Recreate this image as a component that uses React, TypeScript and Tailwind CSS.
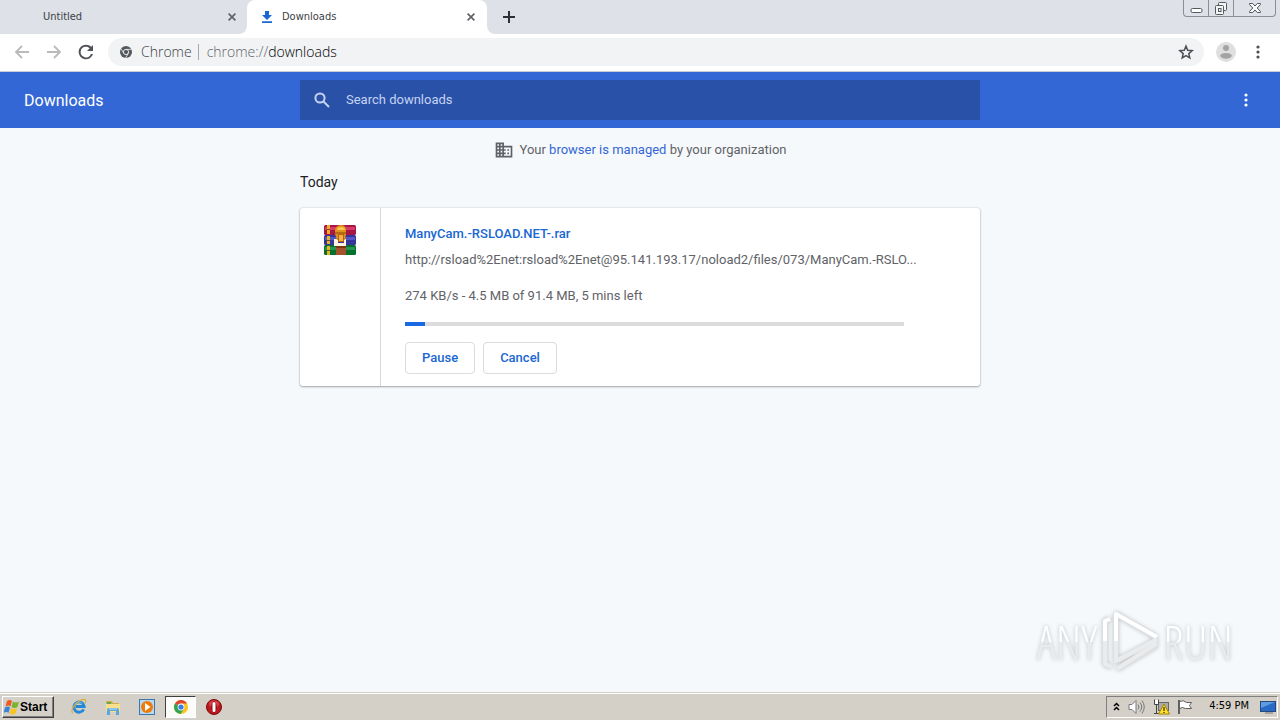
import type { ReactNode } from "react";

const iconButton = "flex shrink-0 items-center justify-center";

function CloseIcon() {
  return (
    <svg width="8" height="8" viewBox="0 0 8 8" stroke="currentColor" strokeWidth="1.7">
      <path d="M.6.6l6.8 6.8M7.4.6L.6 7.4" />
    </svg>
  );
}

function MoreIcon() {
  return (
    <svg width="4" height="14" viewBox="0 0 4 14" fill="currentColor">
      <circle cx="2" cy="2" r="1.6" />
      <circle cx="2" cy="7" r="1.6" />
      <circle cx="2" cy="12" r="1.6" />
    </svg>
  );
}

function TabStrip() {
  return (
    <div className="flex h-[34px] shrink-0 bg-[#dee1e8] text-[11px] text-[#3c4043]">
      <div className="flex w-[247px] items-center pr-[11px] pl-[43px]">
        <span className="flex-1">Untitled</span>
        <button aria-label="Close Untitled" className={`${iconButton} text-[#5f6368]`}>
          <CloseIcon />
        </button>
      </div>
      <div className="relative flex w-60 items-center rounded-t-lg bg-white pr-3 pl-[14px]">
        <svg className="absolute bottom-0 -left-2" width="8" height="8" fill="white">
          <path d="M8 0v8H0a8 8 0 0 0 8-8z" />
        </svg>
        <svg className="absolute -right-2 bottom-0" width="8" height="8" fill="white">
          <path d="M0 0v8h8a8 8 0 0 1-8-8z" />
        </svg>
        <svg width="12" height="12" viewBox="0 0 12 12" fill="#1967d2" className="mr-[9px]">
          <path d="M4 0h4v4h3L6 9 1 4h3zM1 10.300h10V12H1z" />
        </svg>
        <span className="flex-1">Downloads</span>
        <button aria-label="Close Downloads" className={`${iconButton} text-[#5f6368]`}>
          <CloseIcon />
        </button>
      </div>
      <button aria-label="New tab" className={`${iconButton} ml-4 w-3 text-[#2d3033]`}>
        <svg width="12" height="12" stroke="currentColor" strokeWidth="2">
          <path d="M6 0v12M0 6h12" />
        </svg>
      </button>
      <div className="mr-1 ml-auto flex h-[17px] rounded-b-[4px] border border-t-0 border-[#8b8e94] text-[#55585d]">
        <button aria-label="Minimize" className={`${iconButton} w-6`}>
          <svg width="13" height="13" fill="white" stroke="currentColor">
            <rect x="1" y="6.500" width="11" height="4" rx="1.500" />
          </svg>
        </button>
        <button aria-label="Restore" className={`${iconButton} w-[26px] border-x border-[#8b8e94]`}>
          <svg width="14" height="13" fill="#f3f4f6" stroke="currentColor">
            <rect x="4.500" y=".5" width="8" height="8" rx="1" />
            <rect x="1.500" y="3.500" width="8" height="9" rx="1" />
            <rect x="4.500" y="6.500" width="2.500" height="3" />
          </svg>
        </button>
        <button aria-label="Close window" className={`${iconButton} w-[41px]`}>
          <svg width="12" height="10" fill="#f8f9fb" stroke="currentColor">
            <path d="M.5.5h3.200L6 3 8.300.5h3.200v1L8.200 5l3.300 3.500v1H8.300L6 7 3.700 9.500H.5v-1L3.800 5 .5 1.500z" />
          </svg>
        </button>
      </div>
    </div>
  );
}

function Toolbar() {
  return (
    <div className="flex h-[38px] shrink-0 items-center border-b border-[#c9cdd4] bg-white px-[14px] pb-px">
      <button aria-label="Back" className={`${iconButton} w-4 text-[#b9babc]`}>
        <svg width="16" height="14" fill="none" stroke="currentColor" strokeWidth="1.800">
          <path d="M15 7H2M8 1L2 7l6 6" />
        </svg>
      </button>
      <button aria-label="Forward" className={`${iconButton} ml-4 w-4 text-[#b9babc]`}>
        <svg width="16" height="14" fill="none" stroke="currentColor" strokeWidth="1.800">
          <path d="M1 7h13M8 1l6 6-6 6" />
        </svg>
      </button>
      <button aria-label="Reload" className={`${iconButton} ml-4 w-4 text-[#4f5256]`}>
        <svg width="16" height="16" fill="currentColor">
          <path d="M13.300 2.700A7.300 7.300 0 0 0 8 .7a7.300 7.300 0 1 0 7 9.200h-2.100A5.300 5.300 0 1 1 8 2.700c1.500 0 2.800.6 3.700 1.600L9 7h6V1z" />
        </svg>
      </button>
      <div className="ml-[14px] flex h-7 flex-1 items-center rounded-full bg-[#f1f3f4] pr-[10px] pl-3 font-['Open_Sans',sans-serif] text-sm font-light text-[#5f6368]">
        <svg width="12" height="12" viewBox="0 0 12 12">
          <circle cx="6" cy="6" r="6" fill="#54585c" />
          <circle cx="6" cy="6" r="2.600" fill="none" stroke="#f1f3f4" strokeWidth=".9" />
          <path d="M6 3.400h5.400M3.700 7.300L1.100 2.700M8.300 7.300L5.600 12" stroke="#f1f3f4" strokeWidth=".8" />
        </svg>
        <span className="ml-[9px] text-[#3c4043]">Chrome</span>
        <span className="mr-2 ml-[6px] h-4 w-px bg-[#a5a8ac]" />
        <span>
          chrome://<span className="text-black">downloads</span>
        </span>
        <button aria-label="Bookmark this tab" className={`${iconButton} ml-auto text-[#4d5156]`}>
          <svg width="16" height="16" viewBox="0 0 16 16" fill="none" stroke="currentColor" strokeWidth="1.500">
            <path d="M8 2l1.700 4.200 4.500.4-3.400 3 1 4.400L8 11.600 4.200 14l1-4.400-3.400-3 4.500-.4z" />
          </svg>
        </button>
      </div>
      <button aria-label="Profile" className={`${iconButton} ml-3 w-5`}>
        <svg width="20" height="20">
          <circle cx="10" cy="10" r="10" fill="#dfdfdf" />
          <circle cx="10" cy="6" r="3" fill="#a3a3a3" />
          <ellipse cx="10" cy="13.800" rx="5.800" ry="2.900" fill="#a3a3a3" />
        </svg>
      </button>
      <button aria-label="Browser menu" className={`${iconButton} mr-[6px] ml-5 w-1 text-[#4d5156]`}>
        <MoreIcon />
      </button>
    </div>
  );
}

function PageHeader() {
  return (
    <header className="grid h-14 shrink-0 grid-cols-[1fr_minmax(0,680px)_1fr] items-center bg-[#3367d6] text-white">
      <h1 className="pt-0.5 pl-6 text-base">Downloads</h1>
      <label className="flex h-10 items-center bg-[#2951a8] pl-[14px] text-[#c5d3f2]">
        <svg width="16" height="16" fill="none" stroke="currentColor" strokeWidth="2">
          <circle cx="6" cy="6" r="4.600" />
          <path d="M9.500 9.500l5.500 5.500" />
        </svg>
        <input
          type="search"
          aria-label="Search downloads"
          placeholder="Search downloads"
          className="ml-4 flex-1 bg-transparent text-[13px] outline-none placeholder:text-[#c5d3f2]"
        />
      </label>
      <button aria-label="More actions" className={`${iconButton} mr-8 w-1 justify-self-end`}>
        <MoreIcon />
      </button>
    </header>
  );
}

function ArchiveIcon() {
  return (
    <svg width="32" height="32" viewBox="0 0 32 32">
      <rect y="1" width="32" height="10" rx="1.500" fill="#a81646" />
      <path d="M1 3h30v3H1z" fill="#d93a68" />
      <rect y="11" width="32" height="10" rx="1.500" fill="#34369a" />
      <path d="M1 13h30v3H1z" fill="#5358c4" />
      <rect y="21" width="32" height="10" rx="1.500" fill="#08702d" />
      <path d="M1 23h30v3H1z" fill="#259452" />
      <path d="M3 1h3v9H3zM3 12h3v8H3zM3 22h3v9H3z" fill="#e6b323" />
      <path d="M3 5h3v1H3zM3 16h3v1H3zM3 26h3v1H3z" fill="#77520e" />
      <path d="M12 21h10v10H12z" fill="#a4522c" />
      <path d="M12 22h10v2H12z" fill="#7a3515" />
      <path d="M10 15h4v4h6v-4h2v7H10z" fill="#fff4e2" />
      <path d="M11 10V6q1-5 6-5t5 5v4l-1 6h-8z" fill="#dc921c" />
      <path d="M13 6q0-3 4-3t4 3z" fill="#f8c850" />
      <path d="M11 8h11v2H11z" fill="#b66b12" />
      <path d="M14 10h6v8h-6z" fill="#b4640d" />
      <path d="M15 11h4v6h-4z" fill="#f3b04a" />
    </svg>
  );
}

function ActionButton({ children }: { children: ReactNode }) {
  return (
    <button className="h-8 rounded border border-[#dadce0] px-4 text-[13px] font-medium text-[#1967d2]">
      {children}
    </button>
  );
}

function DownloadCard() {
  return (
    <article className="flex rounded-[3px] bg-white text-[13px] text-[#5f6368] shadow-[0_1px_2px_rgba(60,64,67,0.4),0_0_2px_rgba(60,64,67,0.25)]">
      <div className="flex w-[81px] shrink-0 justify-center border-r border-[#d8d8d8] pt-4">
        <ArchiveIcon />
      </div>
      <div className="min-w-0 flex-1 py-3 pr-[76px] pl-6">
        <a href="#file" className="block pt-1 leading-5 font-medium text-[#1967d2]">
          ManyCam.-RSLOAD.NET-.rar
        </a>
        <a href="#source" className="mt-[6px] block leading-5 whitespace-nowrap">
          http://rsload%2Enet:rsload%2Enet@95.141.193.17/noload2/files/073/ManyCam.-RSLO...
        </a>
        <p className="mt-4 leading-5">274 KB/s - 4.5 MB of 91.4 MB, 5 mins left</p>
        <div
          role="progressbar"
          aria-label="Download progress"
          aria-valuenow={4}
          className="mt-4 h-1 bg-[#dcdcdc]"
        >
          <div className="h-1 bg-[#1a6ae4]" style={{ width: "4%" }} />
        </div>
        <div className="mt-4 flex gap-2">
          <ActionButton>Pause</ActionButton>
          <ActionButton>Cancel</ActionButton>
        </div>
      </div>
    </article>
  );
}

function Watermark() {
  const word =
    "bg-linear-to-b from-white from-50% to-[#e9ebec] to-50% bg-clip-text text-[48px] leading-[56px] text-transparent";
  return (
    <div className="absolute right-[47px] bottom-[18px] flex items-center font-['Open_Sans_Condensed_Light','Open_Sans_Condensed','Roboto_Condensed',sans-serif] font-light drop-shadow-[0_0_2px_rgba(0,0,0,0.24)]">
      <span className={word}>ANY</span>
      <svg width="66" height="64" viewBox="0 0 66 64" fill="none" strokeLinejoin="round">
        <path d="M19 4v46M19 4l41 24M12 9L8 11v43l6 3M21 50L60 31M20 59l40-24" stroke="#dfe1e3" strokeWidth="5" />
        <path d="M19 31V4l41 23M13 9L8 11v20" stroke="white" strokeWidth="4" />
        <path d="M19 31v20l41-22M8 31v23l7 3M20 59l40-26" stroke="#e9ebec" strokeWidth="4" />
      </svg>
      <span className={word}>RUN</span>
    </div>
  );
}

function StartFlag() {
  return (
    <svg width="16" height="16" viewBox="0 0 16 16" className="shrink-0">
      <path d="M3 2q3-2 5 0L6.500 7.500q-2-2-5 0z" fill="#ed5b24" />
      <path d="M9 2.500q3 2 6 0L13.500 8q-3 2-6 0z" fill="#79b52c" />
      <path d="M1 8.500q3-2 5 0L4.500 14q-2-2-5 0z" fill="#3b83d9" />
      <path d="M7 9q3 2 6 0l-1.500 5.500q-3 2-6 0z" fill="#f8c51e" />
    </svg>
  );
}

function Taskbar() {
  return (
    <footer className="flex h-7 shrink-0 items-center border-t border-[#d4d0c8] bg-[#d4d0c8] font-['DejaVu_Sans_Condensed','DejaVu_Sans',sans-serif] text-[11px] text-black shadow-[inset_0_1px_0_white]">
      <button className="ml-[2px] flex h-[22px] w-[52px] items-center border border-t-white border-r-[#404040] border-b-[#404040] border-l-white pl-px font-['Liberation_Sans',sans-serif] text-xs font-bold shadow-[inset_-1px_-1px_0_#808080]">
        <StartFlag />
        Start
      </button>
      <button aria-label="Internet Explorer" className={`${iconButton} ml-[17px] w-4`}>
        <svg width="17" height="17" viewBox="0 0 17 17" fill="none">
          <path d="M13.500 11.500a5.500 5.500 0 1 1 .500-3H5" stroke="#2388d8" strokeWidth="3" />
          <path d="M4 6.500a5 5 0 0 1 8-1.500" stroke="#79caf4" />
          <path d="M2 15.500C-2 12 8 1 14 1c3 0 1 4 1 4" stroke="#dcae35" strokeWidth="1.300" />
        </svg>
      </button>
      <button aria-label="Windows Explorer" className={`${iconButton} ml-[18px] w-4`}>
        <svg width="16" height="16">
          <path d="M1 2h6l1 2h6v9H1z" fill="#d9ad45" />
          <path d="M2 3h4v3H2z" fill="#58ad5b" />
          <path d="M1 5h14v8H1z" fill="#f7df8c" />
          <path d="M2 16v-5q0-2 2-2h8q2 0 2 2v5h-3v-4H5v4z" fill="#5ba7d9" />
          <path d="M4 10h8" stroke="#b9e2f7" />
        </svg>
      </button>
      <button aria-label="Media Player" className={`${iconButton} ml-[18px] w-4`}>
        <svg width="16" height="16">
          <rect x=".5" y=".5" width="15" height="15" fill="#b8d9f1" stroke="#3978ad" />
          <circle cx="8" cy="8" r="6" fill="#ef7a08" />
          <path d="M6 4l5.500 4L6 12z" fill="white" />
        </svg>
      </button>
      <button
        aria-label="Google Chrome"
        className={`${iconButton} ml-[10px] h-[22px] w-[31px] border border-t-[#404040] border-r-white border-b-white border-l-[#404040] bg-[#fbfbfa]`}
      >
        <svg width="14" height="14" viewBox="0 0 14 14">
          <circle cx="7" cy="7" r="7" fill="#f9c51d" />
          <path d="M7 7L1 3.400A7 7 0 0 1 13 3.500H7z" fill="#de4334" />
          <path d="M1 3.400A7 7 0 0 0 6.500 14L10 8.800 7 7z" fill="#31a352" />
          <circle cx="7" cy="7" r="3.400" fill="white" />
          <circle cx="7" cy="7" r="2.600" fill="#377de4" />
        </svg>
      </button>
      <button aria-label="Opera" className={`${iconButton} ml-[10px] w-4`}>
        <svg width="16" height="16">
          <circle cx="8" cy="8" r="7.500" fill="#bd1820" stroke="#7c080d" />
          <ellipse cx="8" cy="5" rx="5" ry="3.500" fill="#d8444b" />
          <ellipse cx="8" cy="8" rx="2.700" ry="5.700" fill="#8b0b11" />
          <rect x="6.500" y="3" width="3" height="10" rx="1.500" fill="white" />
        </svg>
      </button>
      <div className="mr-[2px] ml-auto flex h-[22px] items-center border border-t-[#808080] border-r-white border-b-white border-l-[#808080] pr-px pl-[5px]">
        <button aria-label="Show hidden icons" className={`${iconButton} w-2`}>
          <svg width="7" height="9" fill="none" stroke="black" strokeWidth="1.500">
            <path d="M1 4l2.500-2.500L6 4M1 8l2.500-2.500L6 8" />
          </svg>
        </button>
        <svg className="ml-2" width="17" height="16" fill="white" stroke="#77797b">
          <path d="M1 5.500h3l4-4v13l-4-4H1z" />
          <path d="M10 5.500q2 2.500 0 5M12 3.500q3.500 4.500 0 9M14 1.500q4.500 6.500 0 13" fill="none" />
        </svg>
        <svg className="ml-2" width="17" height="16">
          <rect x="5.500" y="3.500" width="10" height="8" fill="#aaa" stroke="#666" />
          <path d="M1.500.5v5h4v-5M3.500 5v10M1 14.500h8" fill="none" stroke="#444" />
          <path d="M2 1h3v4H2z" fill="white" />
          <path d="M11 5l5.500 10h-11z" fill="#ffe12b" stroke="#a58200" />
          <path d="M11 8v4M11 13v1" stroke="black" />
        </svg>
        <svg className="ml-[7px]" width="16" height="16" fill="white" stroke="#606060">
          <path d="M2.500 2.500q4-2 7 1h5l-2 3 2 3h-6q-3-2-6 0M2.500 1v14" />
          <path d="M1.500 1v14" />
        </svg>
        <span className="ml-4">4:59 PM</span>
        <svg className="ml-[11px]" width="16" height="16">
          <rect x=".5" y="2.500" width="15" height="10" fill="#286ac6" stroke="#25497d" />
          <path d="M1 3h14L1 9z" fill="#5c9de4" />
          <path d="M5 14h8" stroke="#777" />
        </svg>
      </div>
    </footer>
  );
}

export default function App() {
  return (
    <div className="flex min-h-screen flex-col bg-[#f6f9fc] font-['Roboto',sans-serif]">
      <div className="flex flex-col font-['DejaVu_Sans_Condensed','DejaVu_Sans',sans-serif]">
        <TabStrip />
        <Toolbar />
      </div>
      <PageHeader />
      <main className="relative flex-1">
        <div className="mx-auto max-w-[680px]">
          <div className="flex h-11 items-center justify-center gap-1.5 text-[13px] text-[#5f6368]">
            <svg width="20" height="20" viewBox="0 0 24 24" fill="currentColor">
              <path d="M12 7V3H2v18h20V7H12zM6 19H4v-2h2v2zm0-4H4v-2h2v2zm0-4H4V9h2v2zm0-4H4V5h2v2zm4 12H8v-2h2v2zm0-4H8v-2h2v2zm0-4H8V9h2v2zm0-4H8V5h2v2zm10 12h-8v-2h2v-2h-2v-2h2v-2h-2V9h8v10zm-2-8h-2v2h2v-2zm0 4h-2v2h2v-2z" />
            </svg>
            <span>
              Your <a href="#managed" className="text-[#3367d6]">browser is managed</a> by your organization
            </span>
          </div>
          <h2 className="mb-4 text-sm leading-5 text-[#202124]">Today</h2>
          <DownloadCard />
        </div>
        <Watermark />
      </main>
      <Taskbar />
    </div>
  );
}
